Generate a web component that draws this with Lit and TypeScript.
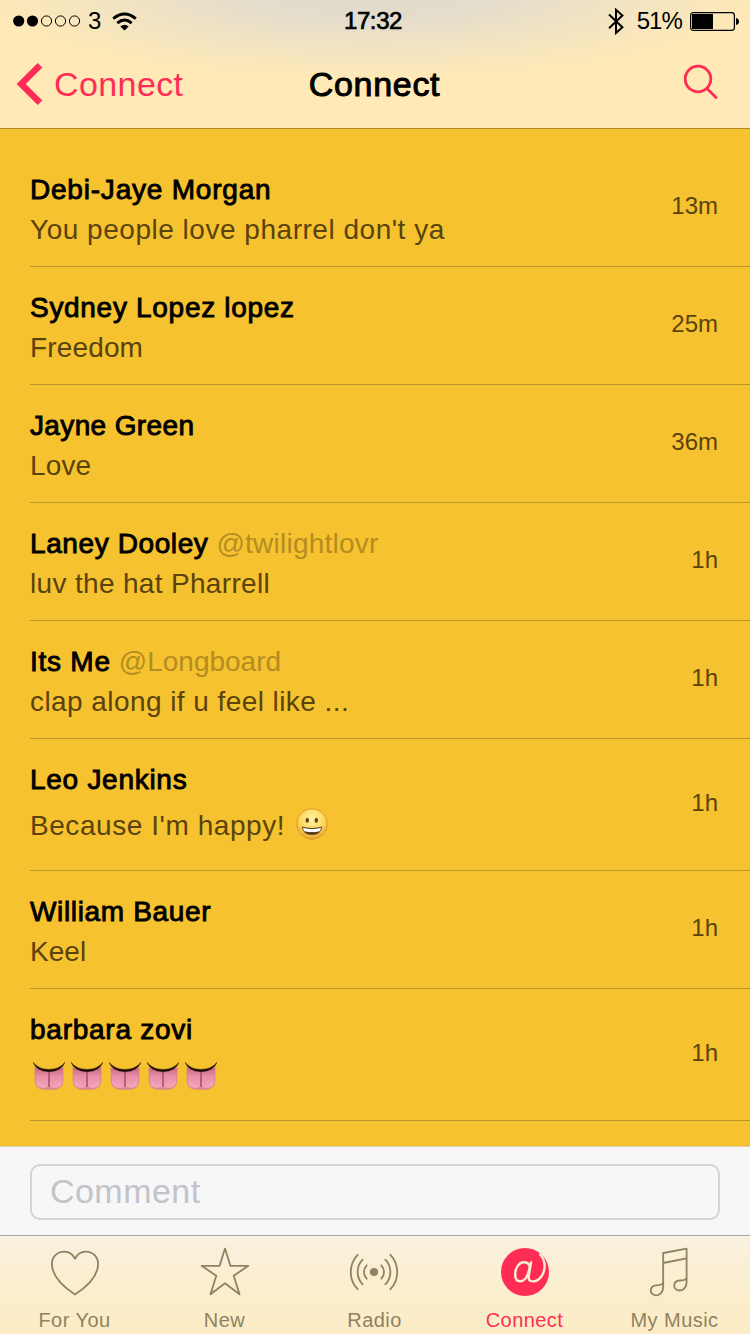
import { LitElement, html, css, svg, nothing } from "lit";
import { customElement } from "lit/decorators.js";
import { classMap } from "lit/directives/class-map.js";
import { styleMap } from "lit/directives/style-map.js";

interface Run {
  value: string;
  track: number;
}

interface Comment {
  name: Run;
  handle?: Run;
  text?: Run;
  emoji?: "grin" | "tongues";
  time: string;
}

const run = (value: string, track: number): Run => ({ value, track });

const COMMENTS: Comment[] = [
  { name: run("Debi-Jaye Morgan", 0.79), text: run("You people love pharrel don't ya", 0.52), time: "13m" },
  { name: run("Sydney Lopez lopez", 0.7), text: run("Freedom", 0.15), time: "25m" },
  { name: run("Jayne Green", 0.37), text: run("Love", 0.15), time: "36m" },
  { name: run("Laney Dooley", 0.6), handle: run("@twilightlovr", 0.23), text: run("luv the hat Pharrell", 0.33), time: "1h" },
  { name: run("Its Me", 0.75), handle: run("@Longboard", 0), text: run("clap along if u feel like ...", 0.43), time: "1h" },
  { name: run("Leo Jenkins", 0.72), text: run("Because I'm happy!", 0.56), emoji: "grin", time: "1h" },
  { name: run("William Bauer", 0.65), text: run("Keel", 0.05), time: "1h" },
  { name: run("barbara zovi", 0.75), emoji: "tongues", time: "1h" },
];

const grin = html`<svg class="grin" width="32" height="32" viewBox="0 0 32 32">
  <defs>
    <radialGradient id="face" cx="50%" cy="35%" r="65%">
      <stop offset="0" stop-color="#fff3a8" />
      <stop offset=".6" stop-color="#fcd95a" />
      <stop offset="1" stop-color="#e9a02c" />
    </radialGradient>
  </defs>
  <circle cx="16" cy="16" r="15.3" fill="url(#face)" stroke="#e09a2b" stroke-width="1" />
  <ellipse cx="11.3" cy="12.3" rx="1.7" ry="2.5" fill="#6b4218" />
  <ellipse cx="20.3" cy="12.3" rx="1.7" ry="2.5" fill="#6b4218" />
  <path d="M5.8 18.6Q16 21.4 26.2 18.6Q25.4 27 16 27Q6.6 27 5.8 18.6Z" fill="#5c4020" />
  <path d="M7 19.8Q16 22.3 25 19.8Q24.4 23.4 22.6 23.6Q16 24.6 9.4 23.6Q7.5 23.4 7 19.8Z" fill="#fff" />
</svg>`;

const tongue = html`<svg width="32" height="28" viewBox="0 0 32 28">
  <defs>
    <linearGradient id="flesh" x1="0" y1="0" x2="0" y2="1">
      <stop offset="0" stop-color="#c9647f" />
      <stop offset=".4" stop-color="#e88fa8" />
      <stop offset=".85" stop-color="#f0a0b6" />
      <stop offset="1" stop-color="#d98292" />
    </linearGradient>
  </defs>
  <path d="M2 5.500Q16 11 30 5.500V18Q30 27.200 21 27.200H11Q2 27.200 2 18Z" fill="url(#flesh)" stroke="#d9808a" stroke-width=".8" />
  <path d="M16 9V25" stroke="#a9506b" stroke-width="1.6" />
  <path d="M5 20Q6 25 12 25.200M27 20Q26 25 20 25.200" stroke="#f6b4c5" stroke-width="1" fill="none" />
  <path d="M0 .200Q5 7.200 16 7.400Q27 7.200 32 .200Q28.500 9.400 16 9.800Q3.500 9.400 0 .200Z" fill="#1c0d05" stroke="#1c0d05" stroke-width=".4" />
</svg>`;

const TABS = [
  {
    label: "For You",
    icon: svg`<path d="M25 9.800C22.800 5 18.800 2.600 14.200 2.600C7.200 2.600 1.900 8 1.900 14.800C1.900 26 12 37 25 45.500C38 37 48.100 26 48.100 14.800C48.100 8 42.800 2.600 35.800 2.600C31.200 2.600 27.200 5 25 9.800Z"/>`,
  },
  {
    label: "New",
    icon: svg`<path d="M25 -.400L30.400 16.800H48.400L33.700 26.700L39.500 45.300L25 34.300L10.500 45.300L16.300 26.700L1.600 16.800H19.600Z"/>`,
  },
  {
    label: "Radio",
    icon: svg`<circle cx="24" cy="23" r="4.100" fill="currentColor" stroke="none"/>
      <path d="M16.700 16.300A9.600 9.600 0 0 0 16.700 29.700M31.300 16.300A9.600 9.600 0 0 1 31.300 29.700M12.600 10.600A18 18 0 0 0 12.600 35.400M35.400 10.600A18 18 0 0 1 35.400 35.400M7.600 5.800A25 25 0 0 0 7.600 40.200M40.400 5.800A25 25 0 0 1 40.400 40.200"/>`,
  },
  {
    label: "Connect",
    active: true,
    icon: svg`<circle cx="25" cy="23" r="24" fill="currentColor" stroke="none"/>
      <path class="cut" d="M29.800 17.500C28.800 14.400 26.400 13.200 24 13.200C18.600 13.200 15.200 19.600 15.200 25.400C15.200 29.800 17.200 32.200 20.200 32.200C25.200 32.200 28.400 26 29.800 17.500M31 13.400L28.800 26.500C28 30.800 29.800 32.400 32.500 32.400C39 32.400 44.600 25.500 44.600 17C44.600 12.500 43 8.500 40.200 5.500"/>`,
  },
  {
    label: "My Music",
    icon: svg`<path d="M13.200 33V4L36.600 -.400V28.200M13.200 14L36.600 9.300M13.200 33V37.500C13.200 43.500 9.800 46.300 6.300 46.300C3 46.300 .800 44.200 .800 41.400C.800 38 3.200 36.500 6.500 36.300C10.500 36.100 13.200 35.200 13.200 33M36.600 28.200V32.700C36.600 38.700 33.200 41.500 29.700 41.500C26.400 41.500 24.200 39.400 24.200 36.600C24.200 33.200 26.600 31.700 29.900 31.500C33.900 31.300 36.600 30.400 36.600 28.200"/>`,
  },
];

@customElement("status-bar")
class StatusBar extends LitElement {
  static styles = css`
    :host {
      display: grid;
      grid-template-columns: 1fr auto 1fr;
      height: 40px;
      line-height: 40px;
      font-size: 24px;
      padding: 1px 11px 0 13px;
      box-sizing: border-box;
      color: #000;
    }
    .side { display: flex; align-items: center; }
    .end { justify-content: flex-end; }
    .carrier { margin-left: 7px; }
    .wifi { margin-left: 11px; }
    .time { letter-spacing: -0.4px; margin-right: 6px; -webkit-text-stroke: 0.7px; }
    .percent { margin: 0 8px 0 13px; letter-spacing: -0.9px; }
    svg { display: block; flex: none; }
  `;
  render() {
    return html`
      <div class="side">
        <svg width="68" height="12" viewBox="0 0 68 12">
          <circle cx="5.7" cy="6" r="5.6" /><circle cx="19.5" cy="6" r="5.6" />
          <g fill="none" stroke="#000"><circle cx="33.5" cy="6" r="5.1" /><circle cx="47.5" cy="6" r="5.1" /><circle cx="61.5" cy="6" r="5.1" /></g>
        </svg>
        <span class="carrier">3</span>
        <svg class="wifi" width="25" height="19" viewBox="0 0 25 19">
          <path d="M12.500 18.600L8.300 14.400Q12.500 11 16.700 14.400Z" />
          <g fill="none" stroke="#000" stroke-width="2.900"><path d="M5.300 11.100Q12.500 5 19.700 11.100" /><path d="M1.200 6.600Q12.500 -2.800 23.800 6.600" /></g>
        </svg>
      </div>
      <span class="time">17:32</span>
      <div class="side end">
        <svg width="16" height="27" viewBox="0 0 16 27">
          <path d="M1 6.500L14.400 19.300L8 25V1.800L14.400 7.500L1 20.300" fill="none" stroke="#000" stroke-width="2" />
        </svg>
        <span class="percent">51%</span>
        <svg width="49" height="19" viewBox="0 0 49 19">
          <rect x=".6" y=".6" width="43.8" height="17.8" rx="2.8" fill="none" stroke="#000" stroke-width="1.2" />
          <rect x="2" y="2" width="21" height="15" />
          <path d="M46 6Q49 6.500 49 9.500Q49 12.500 46 13Z" />
        </svg>
      </div>
    `;
  }
}

@customElement("comment-row")
class CommentRow extends LitElement {
  static properties = { comment: { attribute: false } };
  declare comment: Comment;
  static styles = css`
    :host {
      display: flex;
      align-items: center;
      justify-content: space-between;
      height: 118px;
      box-sizing: border-box;
      margin-left: 30px;
      padding-right: 32px;
      border-bottom: 1px solid #bd9428;
    }
    :host([tall]) { height: 132px; }
    .body { align-self: flex-start; padding-top: 21px; font-size: 28px; line-height: 40px; white-space: nowrap; }
    .head { display: flex; }
    .name { color: #000; -webkit-text-stroke: 0.9px; }
    .handle { color: #b38d22; margin-left: 8px; }
    .text { display: flex; color: #5a430c; }
    :host([tall]) .text { padding-top: 6px; }
    .grin { margin: 2px 0 0 11px; }
    .tongues { display: flex; gap: 6px; padding: 6px 0 0 3px; }
    .time { font-size: 24px; line-height: 28px; color: #5a430c; padding-bottom: 4px; }
    svg { display: block; }
  `;
  private run(cls: string, r?: Run) {
    return r
      ? html`<span class=${cls} style=${styleMap({ letterSpacing: `${r.track}px` })}>${r.value}</span>`
      : nothing;
  }
  render() {
    const c = this.comment;
    return html`
      <div class="body">
        <div class="head">${this.run("name", c.name)}${this.run("handle", c.handle)}</div>
        <div class="text">
          ${this.run("words", c.text)}
          ${c.emoji === "grin" ? grin : nothing}
          ${c.emoji === "tongues" ? html`<div class="tongues">${Array.from({ length: 5 }, () => tongue)}</div>` : nothing}
        </div>
      </div>
      <span class="time">${c.time}</span>
    `;
  }
}

@customElement("tab-bar")
class TabBar extends LitElement {
  static styles = css`
    :host {
      display: grid;
      grid-template-columns: repeat(5, 150px);
      height: 99px;
      box-sizing: border-box;
      border-top: 1px solid #aba8a3;
      background: linear-gradient(#f9f1e0, #fbeecd 55%, #fcecc5);
    }
    .tab { display: flex; flex-direction: column; align-items: center; padding-top: 13px; color: #908260; font-size: 20px; letter-spacing: 0.45px; }
    .active { color: #ff2d55; }
    .label { line-height: 24px; margin: 11px 1px 0 0; }
    svg { display: block; overflow: visible; }
    .cut { stroke: #fbeed2; stroke-width: 2.4; }
  `;
  render() {
    return TABS.map(
      (t) => html`<div class=${classMap({ tab: true, active: !!t.active })}>
        <svg width="50" height="48" viewBox="0 0 50 48" fill="none" stroke="currentColor" stroke-width="1.8" stroke-linecap="round" stroke-linejoin="round">${t.icon}</svg>
        <span class="label">${t.label}</span>
      </div>`
    );
  }
}

@customElement("app-root")
class AppRoot extends LitElement {
  static styles = css`
    :host {
      display: flex;
      flex-direction: column;
      width: 750px;
      height: 1334px;
      overflow: hidden;
      background: #f6c22f;
      font-family: "Liberation Sans", Arial, sans-serif;
    }
    .header {
      height: 129px;
      box-sizing: border-box;
      border-bottom: 1px solid #b38a25;
      background:
        radial-gradient(ellipse 400px 90px at 370px -10px, #dedad0, #e5ddcb 35%, #f4e4c0 70%, rgba(255, 233, 182, 0) 100%),
        #ffe9b6;
    }
    .nav { display: grid; grid-template-columns: 1fr auto 1fr; align-items: center; height: 88px; padding: 0 32px 0 16px; font-size: 34px; }
    .back { display: flex; align-items: center; color: #ff2d55; }
    .back span { margin-left: 11px; letter-spacing: 0.4px; }
    .title { color: #000; -webkit-text-stroke: 1px; letter-spacing: 0.7px; margin-left: 15px; }
    .search { justify-self: end; margin-top: -3px; }
    .list { flex: 1; padding-top: 20px; }
    .composer { height: 89px; box-sizing: border-box; padding: 17px 30px 15px; background: #f7f7f8; border-top: 1px solid #d8d0b4; }
    .field {
      display: block; width: 100%; height: 56px; box-sizing: border-box;
      border: 2px solid #d4d4d8; border-radius: 10px; background: transparent;
      padding: 0 18px 2px; font: 34px "Liberation Sans", Arial, sans-serif; letter-spacing: 0.45px; outline: none;
    }
    .field::placeholder { color: #c3c3ca; opacity: 1; }
    svg { display: block; overflow: visible; }
  `;
  render() {
    return html`
      <div class="header">
        <status-bar></status-bar>
        <div class="nav">
          <div class="back">
            <svg width="27" height="42" viewBox="0 0 27 42"><path d="M24 2.200L5.200 21L24 39.800" fill="none" stroke="#ff2d55" stroke-width="6.500" /></svg>
            <span>Connect</span>
          </div>
          <div class="title">Connect</div>
          <svg class="search" width="34" height="35" viewBox="0 0 34 35" fill="none" stroke="#ff2d55" stroke-width="2.800" stroke-linecap="round">
            <circle cx="14" cy="14" r="12.800" /><path d="M23.500 24L32 32.500" />
          </svg>
        </div>
      </div>
      <div class="list">
        ${COMMENTS.map((c) => html`<comment-row .comment=${c} ?tall=${!!c.emoji}></comment-row>`)}
      </div>
      <div class="composer"><input class="field" placeholder="Comment" /></div>
      <tab-bar></tab-bar>
    `;
  }
}
